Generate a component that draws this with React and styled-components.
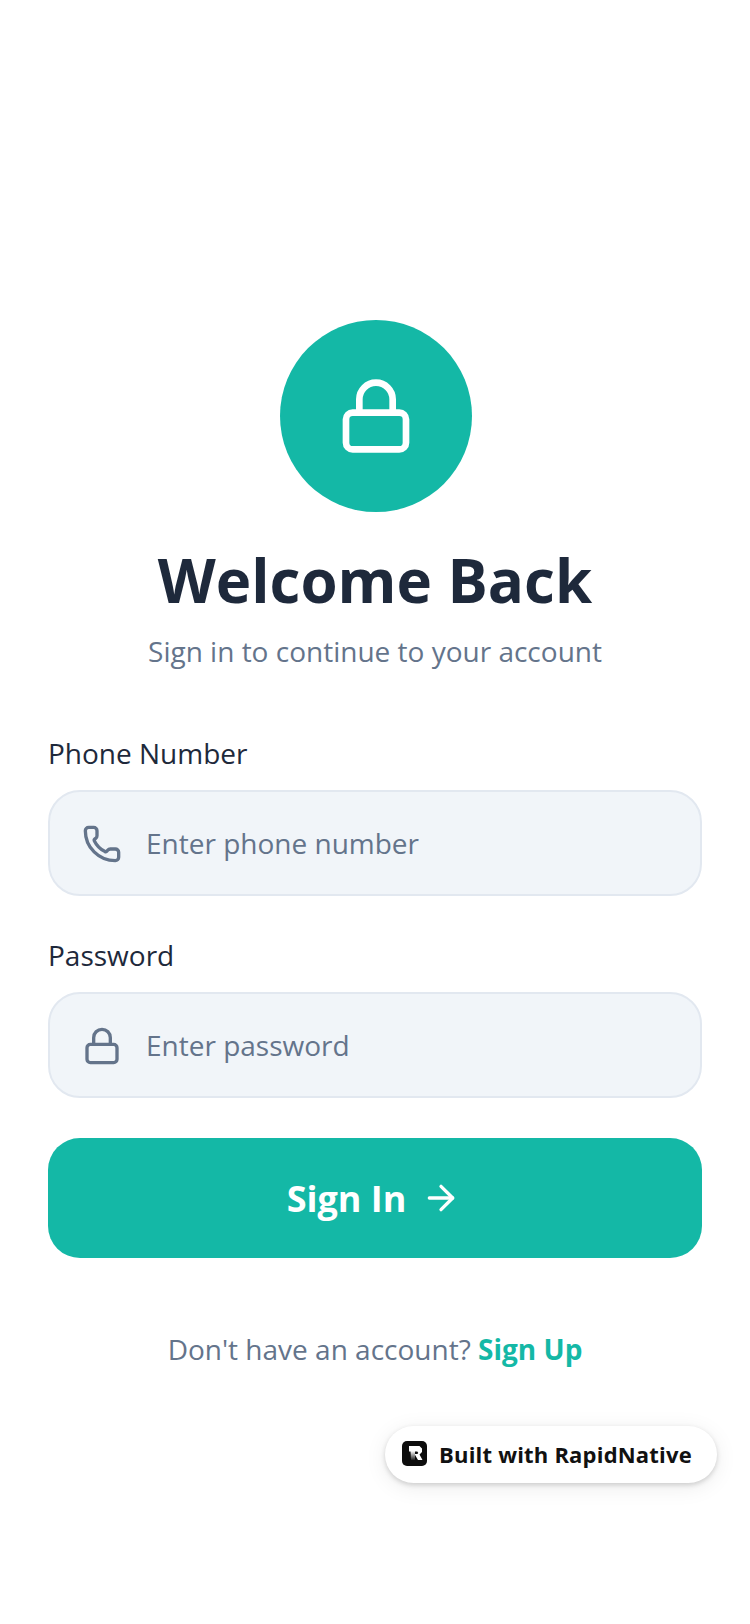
import React from "react";
import styled, { createGlobalStyle } from "styled-components";
import { Lock, Phone, ArrowRight } from "lucide-react";

const Global = createGlobalStyle`
  html, body { margin: 0; padding: 0; background: #fff; }
  * { box-sizing: border-box; }
  body { font-family: "Open Sans", "Noto Sans", sans-serif; }
`;

const Page = styled.main`
  position: relative;
  width: 750px;
  height: 1624px;
  padding: 320px 48px 0;
  display: flex;
  flex-direction: column;
  overflow: hidden;
`;
const Header = styled.header`
  display: flex;
  flex-direction: column;
  align-items: center;
`;
const Circle = styled.div`
  width: 192px;
  height: 192px;
  margin-left: 2px;
  border-radius: 50%;
  background: #14b8a6;
  display: flex;
  align-items: center;
  justify-content: center;
  color: #fff;
`;
const Title = styled.h1`
  margin: 32px 0 0;
  font-size: 60px;
  line-height: 72px;
  font-weight: 700;
  color: #1e293b;
`;
const Subtitle = styled.p`
  margin: 15px 0 0;
  font-size: 28px;
  line-height: 40px;
  color: #64748b;
`;
const Form = styled.form`
  margin-top: 62px;
  display: flex;
  flex-direction: column;
  gap: 39px;
`;
const Field = styled.div`
  display: flex;
  flex-direction: column;
`;
const Label = styled.label`
  font-size: 28px;
  line-height: 40px;
  color: #1e293b;
  margin-bottom: 17px;
`;
const InputBox = styled.div`
  height: 106px;
  border: 2px solid #e2e8f0;
  border-radius: 32px;
  background: #f1f5f9;
  display: flex;
  align-items: center;
  padding: 0 32px;
  gap: 24px;
  color: #64748b;
`;
const InputIcon = styled.span`
  display: flex;
  padding-top: 2px;
`;
const Placeholder = styled.span`
  font-size: 28px;
  line-height: 40px;
  color: #64748b;
`;
const Submit = styled.button`
  height: 120px;
  margin-top: 1px;
  border: 0;
  border-radius: 32px;
  background: #14b8a6;
  color: #fff;
  font-family: inherit;
  font-size: 36px;
  font-weight: 700;
  display: flex;
  align-items: center;
  justify-content: center;
  gap: 15px;
  padding: 0 2px 0 0;
`;
const Footer = styled.p`
  margin: 71px 0 0;
  text-align: center;
  font-size: 28px;
  line-height: 40px;
  color: #64748b;
`;
const FooterLink = styled.a`
  color: #14b8a6;
  font-weight: 700;
`;
const Badge = styled.div`
  position: absolute;
  left: 385px;
  top: 1426px;
  width: 332px;
  height: 57px;
  border-radius: 29px;
  background: #fff;
  box-shadow: 0 2px 5px rgba(0,0,0,0.16), 0 4px 22px rgba(0,0,0,0.08);
  display: flex;
  align-items: center;
  padding: 0 0 2px 17px;
  gap: 12px;
  font-size: 22px;
  line-height: 30px;
  font-weight: 700;
  letter-spacing: 0.2px;
  color: #111;
  white-space: nowrap;
`;

const Logo = () => (
  <svg width="25" height="25" viewBox="0 0 25 25" aria-hidden="true">
    <defs>
      <linearGradient id="stem" x1="0" y1="0" x2="0" y2="1">
        <stop offset="0" stopColor="#fff" />
        <stop offset="1" stopColor="#222" />
      </linearGradient>
    </defs>
    <rect width="25" height="25" rx="5" fill="#0d0d0d" />
    <path d="M7 5h10.5L20 7.5v3.5l-2.5 2.5 3 5.5h-4.5l-3.5-6h2.8l1-1-1-1.5H7z" fill="#fff" />
    <path d="M8.5 10h4.5v9H9z" fill="url(#stem)" />
  </svg>
);

export default function App() {
  return (
    <Page>
      <Global />
      <Header>
        <Circle><Lock size={80} strokeWidth={2} /></Circle>
        <Title>Welcome Back</Title>
        <Subtitle>Sign in to continue to your account</Subtitle>
      </Header>
      <Form>
        <Field>
          <Label>Phone Number</Label>
          <InputBox>
            <InputIcon><Phone size={40} strokeWidth={2} /></InputIcon>
            <Placeholder>Enter phone number</Placeholder>
          </InputBox>
        </Field>
        <Field>
          <Label>Password</Label>
          <InputBox>
            <InputIcon><Lock size={40} strokeWidth={2} /></InputIcon>
            <Placeholder>Enter password</Placeholder>
          </InputBox>
        </Field>
        <Submit type="button">
          Sign In
          <ArrowRight size={40} strokeWidth={2} />
        </Submit>
      </Form>
      <Footer>Don't have an account? <FooterLink>Sign Up</FooterLink></Footer>
      <Badge><Logo />Built with RapidNative</Badge>
    </Page>
  );
}
